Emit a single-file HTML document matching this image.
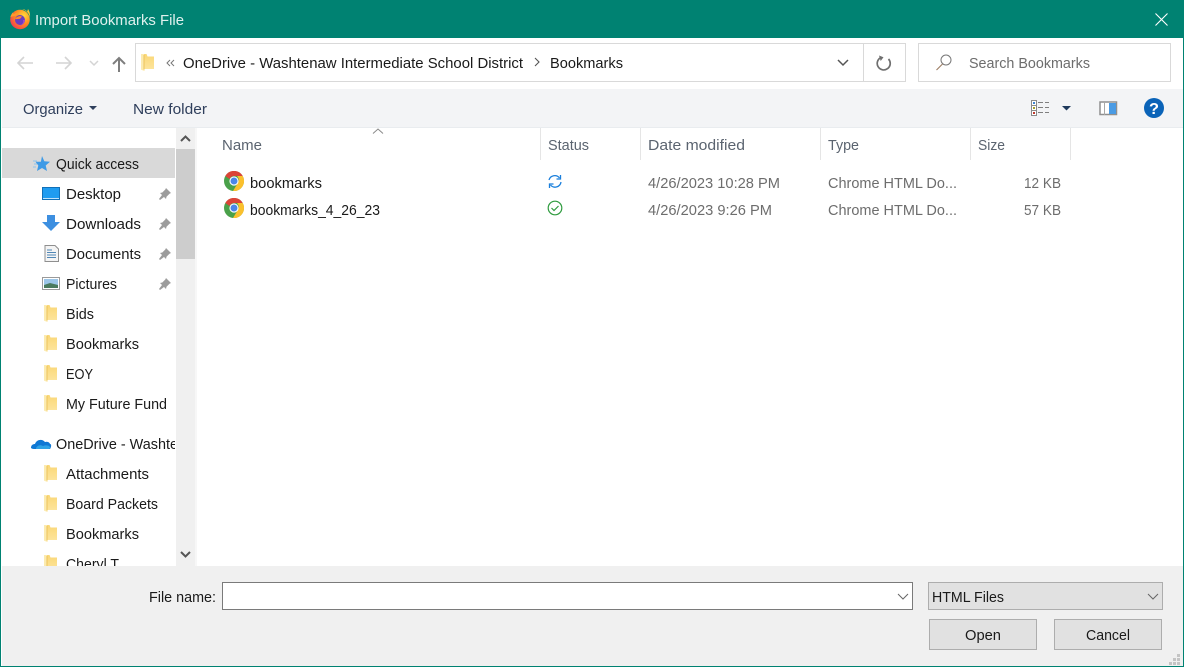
<!DOCTYPE html>
<html><head><meta charset="utf-8"><title>Import Bookmarks File</title>
<style>
html,body{margin:0;padding:0;background:#fff;width:1184px;height:667px;overflow:hidden}
svg{display:block}
text{font-family:"Liberation Sans",sans-serif;font-size:14.5px;fill:#1a1a1a}
.g{fill:#5b6470}.n{fill:#2f3f5c}.d{fill:#6d6d6d}
</style></head><body>
<svg width="1184" height="667" viewBox="0 0 1184 667" xmlns="http://www.w3.org/2000/svg">
<defs>
<linearGradient id="fg" x1="0" y1="0" x2="0" y2="1"><stop offset="0" stop-color="#fad777"/><stop offset="1" stop-color="#fde6a0"/></linearGradient>
<radialGradient id="ff" cx=".7" cy=".3" r=".85"><stop offset="0" stop-color="#ffd93a"/><stop offset=".5" stop-color="#ff8a1f"/><stop offset="1" stop-color="#f0305a"/></radialGradient>
<symbol id="fold" viewBox="0 0 13 17" overflow="visible">
<path d="M0 0h5.500l1 2.500H13V15H3.500v2L0 15.500z" fill="url(#fg)"/>
<path d="M0 0h3v15.500L3.500 17 0 15.500z" fill="#fcebb0"/>
<path d="M3 1v14.500" stroke="#ecc35c" stroke-width="1"/>
</symbol>
<symbol id="pin" viewBox="0 0 14 14">
<path d="M8 1l5 5-1.500 .7-3 3-.5 2.300-2-2L2 13l-1-1 3-4-2-2 2.300-.5 3-3z" fill="#9c9c9c"/>
</symbol>
<symbol id="chrome" viewBox="0 0 20 20">
<circle cx="10" cy="10" r="10" fill="#4aa14a"/>
<path d="M1.300 5A10 10 0 0 1 18.700 5H10a5 5 0 0 0-4.500 3z" fill="#db4437"/>
<path d="M18.700 5A10 10 0 0 1 9 20l4.500-7.500A5 5 0 0 0 14.500 7.500 5 5 0 0 0 13 5z" fill="#fbc02d"/>
<circle cx="10" cy="10" r="4.600" fill="#fff"/><circle cx="10" cy="10" r="3.500" fill="#4a86e8"/>
</symbol>
</defs>

<!-- frame -->
<rect width="1184" height="667" fill="#fff"/>
<rect width="1184" height="38" fill="#008272"/>

<!-- firefox logo -->
<circle cx="20" cy="19.500" r="9.800" fill="url(#ff)"/>
<path d="M22 9c4 1 7.500 4.500 8 8.500 .3-3-.2-6-2-8.500l-.8 2.500C26 10 24 9 22 9z" fill="#ffc42e"/>
<path d="M10.300 17c.7-2 1.500-3.500 2.500-4.500l1 2c1.500-1.500 3-2 4.500-2l-2 3z" fill="#ff9a2e"/>
<circle cx="20" cy="20" r="5" fill="#6a3cc0"/>
<path d="M15 19c1.500-2.500 5-3.500 7-2.500l-2 2.200c-2 0-4 .8-5 .3z" fill="#ff8a2a"/>
<path d="M25 20c0 3-2.500 5.500-5.500 5.500 3-1 4-3 3.500-5.500z" fill="#a04ad0"/>
<text x="35" y="25" style="fill:#dff1ee" textLength="149" lengthAdjust="spacingAndGlyphs">Import Bookmarks File</text>
<path d="M1155.500 13.500l12 12m0-12l-12 12" stroke="#fff" stroke-width="1.100" fill="none"/>

<!-- nav -->
<g fill="none" stroke="#d4d4d4" stroke-width="1.600">
<path d="M18 63h15M24 57l-6 6 6 6"/>
<path d="M56 63h15M65 57l6 6-6 6"/>
</g>
<path d="M90 61l4 4 4-4" fill="none" stroke="#d4d4d4" stroke-width="1.500"/>
<path d="M119 72V58M113 64l6-6 6 6" fill="none" stroke="#7e7e7e" stroke-width="2"/>

<!-- address -->
<rect x="135.500" y="43.500" width="770" height="38" fill="#fff" stroke="#d9d9d9"/>
<path d="M863.500 44v37" stroke="#d9d9d9"/>
<use href="#fold" x="141" y="54" width="13" height="17"/>
<path d="M170 60l-3 3 3 3M174 60l-3 3 3 3" fill="none" stroke="#777" stroke-width="1"/>
<text x="183" y="68" textLength="340" lengthAdjust="spacingAndGlyphs">OneDrive - Washtenaw Intermediate School District</text>
<path d="M535 58l4 4-4 4" fill="none" stroke="#555" stroke-width="1.100"/>
<text x="550" y="68" textLength="73" lengthAdjust="spacingAndGlyphs">Bookmarks</text>
<path d="M838 60l5 5 5-5" fill="none" stroke="#555" stroke-width="1.500"/>
<path d="M881 57.500a6.500 6.500 0 1 0 7.500 1.500" fill="none" stroke="#6f6f6f" stroke-width="1.700"/>
<path d="M879 55.500l4.500 1.800-2.800 3.700z" fill="#6f6f6f"/>

<!-- search -->
<rect x="918.500" y="43.500" width="252" height="38" fill="#fff" stroke="#d9d9d9"/>
<circle cx="946" cy="60" r="5" fill="none" stroke="#777" stroke-width="1"/>
<path d="M942.500 64l-6 6" stroke="#9a7a60" stroke-width="1.100"/>
<text x="969" y="68" class="d" textLength="121" lengthAdjust="spacingAndGlyphs">Search Bookmarks</text>

<!-- toolbar -->
<rect x="2" y="89" width="1181" height="38" fill="#f3f4f6"/>
<rect x="2" y="127" width="1181" height="1" fill="#e9ecef"/>
<text x="23" y="114" class="n" textLength="60" lengthAdjust="spacingAndGlyphs">Organize</text>
<path d="M89 106h8l-4 4z" fill="#2f3f5c"/>
<text x="133" y="114" class="n" textLength="74" lengthAdjust="spacingAndGlyphs">New folder</text>
<g stroke="#8a8a8a" fill="#fff">
<rect x="1031.500" y="100.500" width="5" height="5"/><rect x="1031.500" y="105.500" width="5" height="5"/><rect x="1031.500" y="110.500" width="5" height="5"/>
</g>
<rect x="1033" y="102" width="2" height="2" fill="#3f86d0"/>
<rect x="1033" y="107" width="2" height="2" fill="#a6a02a"/>
<rect x="1033" y="112" width="2" height="2" fill="#c0392c"/>
<path d="M1038 102.500h5M1045 102.500h4M1038 107.500h5M1045 107.500h4M1038 112.500h5M1045 112.500h4" stroke="#7f7f7f" stroke-width="1"/>
<path d="M1062 106h9l-4.500 4.500z" fill="#1f3a5c"/>
<rect x="1100" y="102" width="16.500" height="12.500" fill="#fff" stroke="#8f8f8f" stroke-width="1.500"/>
<path d="M1104.500 102v13" stroke="#a8a8a8"/>
<rect x="1109" y="103" width="7" height="11" fill="#4a9be4"/>
<circle cx="1154" cy="108" r="10" fill="#0a63b8"/>
<text x="1149" y="114" style="fill:#fff;font-weight:700;font-size:16px" textLength="10" lengthAdjust="spacingAndGlyphs">?</text>

<!-- sidebar -->
<rect x="2" y="148" width="173" height="30" fill="#d9d9d9"/>
<rect x="176" y="128" width="19" height="438" fill="#f0f0f0"/>
<rect x="176" y="149" width="19" height="110" fill="#cdcdcd"/>
<path d="M181 141l4.500-4.500 4.500 4.500" fill="none" stroke="#555" stroke-width="2"/>
<path d="M181 552l4.500 4.500 4.500-4.500" fill="none" stroke="#555" stroke-width="2"/>
<rect x="195" y="128" width="2" height="438" fill="#f7f7f7"/>

<path d="M42 156l2.300 5.200 5.700.5-4.300 3.800 1.300 5.500-5-3-5 3 1.300-5.500-2.800-3.800h5.400z" fill="#3d9ae6"/>
<path d="M33 161h4M34 164h3M33 167h3" stroke="#8cc4ef" stroke-width="1"/>
<text x="56" y="169" textLength="83" lengthAdjust="spacingAndGlyphs">Quick access</text>

<rect x="42.500" y="187.500" width="17" height="12" fill="#1f9cf0" stroke="#1170b8"/>
<path d="M43 198.500h16" stroke="#bfe3fb"/>
<text x="66" y="199" textLength="55" lengthAdjust="spacingAndGlyphs">Desktop</text>
<use href="#pin" x="158" y="187" width="14" height="14"/>

<path d="M47 215h8v7h5l-9 9-9-9h5z" fill="#3d8fe0"/>
<text x="66" y="229" textLength="75" lengthAdjust="spacingAndGlyphs">Downloads</text>
<use href="#pin" x="158" y="217" width="14" height="14"/>

<path d="M45 245.500h10l3.500 3.500v12.500H45z" fill="#f4f4f4" stroke="#8f8f8f"/>
<path d="M47 250h5M47 252.500h9M47 255h9M47 257.500h9" stroke="#4f86b5"/>
<text x="66" y="259" textLength="75" lengthAdjust="spacingAndGlyphs">Documents</text>
<use href="#pin" x="158" y="247" width="14" height="14"/>

<rect x="42.500" y="277.500" width="17" height="12" fill="#fff" stroke="#9a9a9a"/>
<rect x="44" y="279" width="14" height="9" fill="#9cc6e8"/>
<path d="M44 285l6-2 8 2v3H44z" fill="#4a7a5e"/>
<text x="66" y="289" textLength="51" lengthAdjust="spacingAndGlyphs">Pictures</text>
<use href="#pin" x="158" y="277" width="14" height="14"/>

<use href="#fold" x="44" y="305" width="13" height="17"/>
<text x="66" y="319" textLength="28" lengthAdjust="spacingAndGlyphs">Bids</text>
<use href="#fold" x="44" y="335" width="13" height="17"/>
<text x="66" y="349" textLength="73" lengthAdjust="spacingAndGlyphs">Bookmarks</text>
<use href="#fold" x="44" y="365" width="13" height="17"/>
<text x="66" y="379" textLength="27" lengthAdjust="spacingAndGlyphs">EOY</text>
<use href="#fold" x="44" y="395" width="13" height="17"/>
<text x="66" y="409" textLength="101" lengthAdjust="spacingAndGlyphs">My Future Fund</text>

<path d="M31 448c0-3 2-4 4-4 1-4 7-6 10-2 3-1 5 1 5 2 2 0 1 4 0 5H34c-2 0-3-1-3-1z" fill="#0f78d4"/>
<path d="M36 449c0-3 4-5 7-3 2-1 6-1 7 1 0 1 0 2-1 2z" fill="#2ea3e6"/>
<clipPath id="c1"><rect x="2" y="428" width="173" height="30"/></clipPath>
<text x="56" y="449" clip-path="url(#c1)" textLength="122" lengthAdjust="spacingAndGlyphs">OneDrive - Washte</text>

<use href="#fold" x="44" y="465" width="13" height="17"/>
<text x="66" y="479" textLength="83" lengthAdjust="spacingAndGlyphs">Attachments</text>
<use href="#fold" x="44" y="495" width="13" height="17"/>
<text x="66" y="509" textLength="92" lengthAdjust="spacingAndGlyphs">Board Packets</text>
<use href="#fold" x="44" y="525" width="13" height="17"/>
<text x="66" y="539" textLength="73" lengthAdjust="spacingAndGlyphs">Bookmarks</text>
<clipPath id="c2"><rect x="2" y="548" width="173" height="18"/></clipPath>
<g clip-path="url(#c2)">
<use href="#fold" x="44" y="555" width="13" height="17"/>
<text x="66" y="569" textLength="53" lengthAdjust="spacingAndGlyphs">Cheryl T</text>
</g>

<!-- headers -->
<path d="M373 133.500l5-4.500 5 4.500" fill="none" stroke="#8a8a8a" stroke-width="1"/>
<path d="M540.500 128v32M640.500 128v32M820.500 128v32M970.500 128v32M1070.500 128v32" stroke="#e5e5e5"/>
<text x="222" y="150" class="g" textLength="40" lengthAdjust="spacingAndGlyphs">Name</text>
<text x="548" y="150" class="g" textLength="41" lengthAdjust="spacingAndGlyphs">Status</text>
<text x="648" y="150" class="g" textLength="97" lengthAdjust="spacingAndGlyphs">Date modified</text>
<text x="828" y="150" class="g" textLength="31" lengthAdjust="spacingAndGlyphs">Type</text>
<text x="978" y="150" class="g" textLength="27" lengthAdjust="spacingAndGlyphs">Size</text>

<!-- rows -->
<use href="#chrome" x="224" y="171" width="20" height="20"/>
<text x="250" y="188" textLength="72" lengthAdjust="spacingAndGlyphs">bookmarks</text>
<path d="M549 180a6 6 0 0 1 10.500-2M561 182a6 6 0 0 1-10.500 3" fill="none" stroke="#1a7fdc" stroke-width="1.300"/>
<path d="M560.500 175v4h-4M549.500 188v-4h4" fill="none" stroke="#1a7fdc" stroke-width="1.300"/>
<text x="648" y="188" class="d" textLength="132" lengthAdjust="spacingAndGlyphs">4/26/2023 10:28 PM</text>
<text x="828" y="188" class="d" textLength="129" lengthAdjust="spacingAndGlyphs">Chrome HTML Do...</text>
<text x="1024" y="188" class="d" textLength="37" lengthAdjust="spacingAndGlyphs">12 KB</text>

<use href="#chrome" x="224" y="198" width="20" height="20"/>
<text x="250" y="215" textLength="130" lengthAdjust="spacingAndGlyphs">bookmarks_4_26_23</text>
<circle cx="555" cy="208" r="6.800" fill="none" stroke="#2e9b3e" stroke-width="1.200"/>
<path d="M551.500 208l2.500 2.500 4.500-4.500" fill="none" stroke="#2e9b3e" stroke-width="1.200"/>
<text x="648" y="215" class="d" textLength="124" lengthAdjust="spacingAndGlyphs">4/26/2023 9:26 PM</text>
<text x="828" y="215" class="d" textLength="129" lengthAdjust="spacingAndGlyphs">Chrome HTML Do...</text>
<text x="1024" y="215" class="d" textLength="37" lengthAdjust="spacingAndGlyphs">57 KB</text>

<!-- footer -->
<rect x="2" y="566" width="1181" height="100" fill="#f0f0f0"/>
<text x="149" y="602" textLength="67" lengthAdjust="spacingAndGlyphs">File name:</text>
<rect x="222.500" y="582.500" width="690" height="27" fill="#fff" stroke="#7a7a7a"/>
<path d="M898 594l5 5 5-5" fill="none" stroke="#666" stroke-width="1"/>
<rect x="928.500" y="582.500" width="234" height="27" fill="#e1e1e1" stroke="#adadad"/>
<text x="932" y="602" textLength="72" lengthAdjust="spacingAndGlyphs">HTML Files</text>
<path d="M1148 594l5 5 5-5" fill="none" stroke="#666" stroke-width="1"/>
<rect x="929.500" y="619.500" width="107" height="30" fill="#e1e1e1" stroke="#adadad"/>
<text x="965" y="640" textLength="36" lengthAdjust="spacingAndGlyphs">Open</text>
<rect x="1054.500" y="619.500" width="107" height="30" fill="#e1e1e1" stroke="#adadad"/>
<text x="1086" y="640" textLength="44" lengthAdjust="spacingAndGlyphs">Cancel</text>
<g fill="#c4c4c4"><rect x="1177" y="654" width="3" height="3"/><rect x="1173" y="658" width="3" height="3"/><rect x="1177" y="658" width="3" height="3"/><rect x="1169" y="662" width="3" height="3"/><rect x="1173" y="662" width="3" height="3"/><rect x="1177" y="662" width="3" height="3"/></g>

<!-- window border -->
<rect x="0" y="0" width="1" height="667" fill="#008272"/>
<rect x="1183" y="0" width="1" height="667" fill="#008272"/>
<rect x="0" y="666" width="1184" height="1" fill="#008272"/>
</svg>
</body></html>
